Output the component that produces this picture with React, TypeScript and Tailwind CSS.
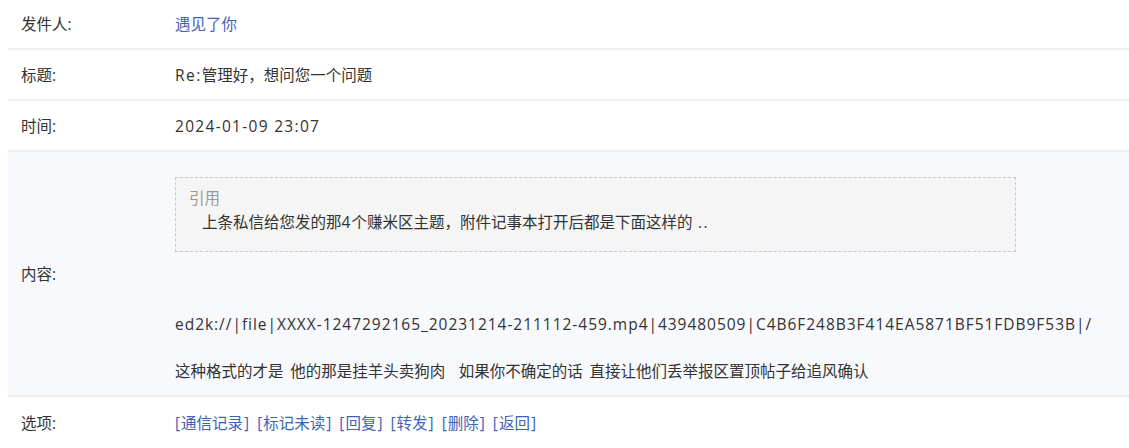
import React from "react";

const font = { fontFamily: '"Open Sans", "Noto Sans CJK SC", sans-serif' };

function Row({ label, children, className = "", last = false }: { label: string; children: React.ReactNode; className?: string; last?: boolean }) {
  return (
    <div className={`flex items-center ${last ? "" : "border-b-2 border-[#efefef]"} ${className}`}>
      <div className="w-[167px] shrink-0 pl-[13px] text-[#333]">{label}</div>
      <div className="flex-1 text-[#333]">{children}</div>
    </div>
  );
}

export default function App() {
  const links = ["通信记录", "标记未读", "回复", "转发", "删除", "返回"];
  return (
    <div className="w-[1129px] h-[448px] overflow-hidden bg-white" style={font}>
      <div className="ml-2 text-[15.5px] leading-6">
        <Row label="发件人:" className="h-[50px]">
          <span className="text-[#3e63b5]">遇见了你</span>
        </Row>
        <Row label="标题:" className="h-[51px]">
          <span className="tracking-[1.5px]">Re:</span>管理好，想问您一个问题
        </Row>
        <Row label="时间:" className="h-[51px]">
          <span className="tracking-[1.3px]">2024-01-09 23:07</span>
        </Row>
        <Row label="内容:" className="h-[245px] bg-[#f7f9fd]">
          <div className="pt-[25px] pb-[13px]">
            <div className="w-[841px] h-[75px] border border-dashed border-[#c8c8c8] bg-[#f5f5f5] pl-[13px] pt-[8px]">
              <div className="text-[#999]">引用</div>
              <div className="pl-[13px] text-[#333]">
                上条私信给您发的那<span className="tracking-[1px]">4</span>个赚米区主题，附件记事本打开后都是下面这样的<span className="tracking-[1.5px]"> ..</span>
              </div>
            </div>
            <div className="mt-[60px] whitespace-nowrap tracking-[0.97px]">
              ed2k://|file|XXXX-1247292165_20231214-211112-459.mp4|439480509|C4B6F248B3F414EA5871BF51FDB9F53B|/
            </div>
            <div className="mt-[23px] whitespace-pre [word-spacing:2.7px]">这种格式的才是 他的那是挂羊头卖狗肉  如果你不确定的话 直接让他们丢举报区置顶帖子给追风确认</div>
          </div>
        </Row>
        <Row label="选项:" className="h-[51px]" last>
          <span className="text-[#3e63b5]">
            {links.map((l, i) => (
              <span key={l} className={i > 0 ? "ml-[8px]" : ""}>
                <span className="mr-[1px]">[</span>
                {l}
                <span className="ml-[1px]">]</span>
              </span>
            ))}
          </span>
        </Row>
      </div>
    </div>
  );
}
